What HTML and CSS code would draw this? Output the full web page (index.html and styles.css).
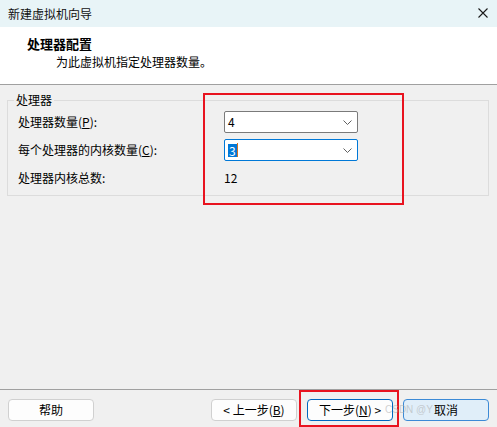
FILE: index.html
```html
<!DOCTYPE html>
<html lang="zh-CN">
<head>
<meta charset="utf-8">
<title>新建虚拟机向导</title>
<link rel="stylesheet" href="styles.css">
</head>
<body>
<div class="window">
  <div class="titlebar">
    <span class="title">新建虚拟机向导</span>
    <svg class="close" width="10" height="10" viewBox="0 0 10 10"><path d="M0.5 0.5 L9.5 9.5 M9.5 0.5 L0.5 9.5" stroke="#1a1a1a" stroke-width="1.1" fill="none"/></svg>
  </div>
  <div class="header">
    <div class="h-title">处理器配置</div>
    <div class="h-sub">为此虚拟机指定处理器数量。</div>
  </div>
  <div class="content">
    <fieldset class="group">
      <legend class="legend">处理器</legend>
      <div class="grid">
        <div class="label">处理器数量(<u>P</u>):</div>
        <div class="combo">
          <span class="val">4</span>
          <svg class="chev" width="9" height="5" viewBox="0 0 9 5"><polyline points="0.5,0.5 4.5,4.5 8.5,0.5" stroke="#606060" stroke-width="1" fill="none"/></svg>
        </div>
        <div class="label">每个处理器的内核数量(<u>C</u>):</div>
        <div class="combo focus">
          <span class="val"><span class="sel">3</span><span class="caret"></span></span>
          <svg class="chev" width="9" height="5" viewBox="0 0 9 5"><polyline points="0.5,0.5 4.5,4.5 8.5,0.5" stroke="#606060" stroke-width="1" fill="none"/></svg>
        </div>
        <div class="label">处理器内核总数:</div>
        <div class="total">12</div>
      </div>
    </fieldset>
  </div>
  <div class="footer">
    <button class="btn">帮助</button>
    <div class="spacer"></div>
    <button class="btn">&lt; 上一步(<u>B</u>)</button>
    <button class="btn default">下一步(<u>N</u>) &gt;</button>
    <button class="btn hover">取消</button>
  </div>
  <div class="mark mark-a"></div>
  <div class="mark mark-b"></div>
  <div class="watermark">CSDN @Y</div>
</div>
</body>
</html>
```
FILE: styles.css
```css
* { box-sizing: border-box; }
html, body { margin: 0; padding: 0; }
body {
  width: 497px;
  height: 427px;
  overflow: hidden;
  font-family: "Noto Sans CJK SC", "Noto Sans", sans-serif;
  font-size: 12px;
  color: #000;
  background: #f0f0f0;
}
.window {
  position: relative;
  width: 497px;
  height: 427px;
  display: flex;
  flex-direction: column;
}
.titlebar {
  height: 27px;
  flex: none;
  background: #e8f4f7;
  display: flex;
  align-items: center;
  justify-content: space-between;
  padding: 0 9px 0 8px;
}
.title { line-height: 27px; color: #111; }
.close { display: block; margin-top: -1px; }
.header {
  height: 58px;
  flex: none;
  background: #fff;
  border-bottom: 1px solid #a0a0a0;
  padding: 9px 0 0 27px;
}
.h-title { font-weight: bold; font-size: 13px; line-height: 16px; }
.h-sub { margin-left: 29px; line-height: 17px; margin-top: 1px; }
.content {
  flex: 1;
  padding: 8px 8px 0 7px;
}
.group {
  margin: 0;
  border: 1px solid #dcdcdc;
  padding: 4px 10px 6px 10px;
}
.legend {
  margin-left: -4px;
  padding: 0 2px;
  line-height: 14px;
}
.grid {
  display: grid;
  grid-template-columns: 206px 134px;
  grid-auto-rows: 22px;
  row-gap: 6px;
  align-items: center;
}
.label { line-height: 16px; }
.combo {
  height: 22px;
  background: #fff;
  border: 1px solid #7a7a7a;
  border-radius: 2px;
  display: flex;
  align-items: center;
  justify-content: space-between;
  padding: 0 5px 0 3px;
}
.combo.focus { border-color: #0078d7; }
.val { display: flex; align-items: center; line-height: 16px; }
.sel {
  background: #0078d7;
  color: #fff;
  line-height: 13px;
  padding: 0 1px 0 1px;
}
.caret { width: 1px; height: 14px; background: #d07020; }
.chev { display: block; }
.total { line-height: 16px; }
.footer {
  height: 38px;
  flex: none;
  border-top: 1px solid #a0a0a0;
  display: flex;
  align-items: flex-start;
  gap: 10px;
  padding: 9px 8px 0 8px;
}
.spacer { flex: 1; }
.btn {
  width: 86px;
  height: 22px;
  font-family: inherit;
  font-size: 12px;
  line-height: 16px;
  color: #000;
  background: #fdfdfd;
  border: 1px solid #d0d0d0;
  border-radius: 4px;
  padding: 0;
}
.btn.default { border-color: #0067c0; }
.btn.hover { background: #e0eef9; border-color: #3c8ad6; }
.mark {
  position: absolute;
  border: 2px solid #e8131f;
}
.mark-a { left: 203px; top: 93px; width: 201px; height: 112px; }
.mark-b { left: 299px; top: 390px; width: 100px; height: 37px; }
.watermark {
  position: absolute;
  left: 385px;
  top: 404px;
  font-family: "Liberation Sans", sans-serif;
  font-size: 10px;
  color: rgba(170, 170, 170, 0.55);
  white-space: nowrap;
}
```
